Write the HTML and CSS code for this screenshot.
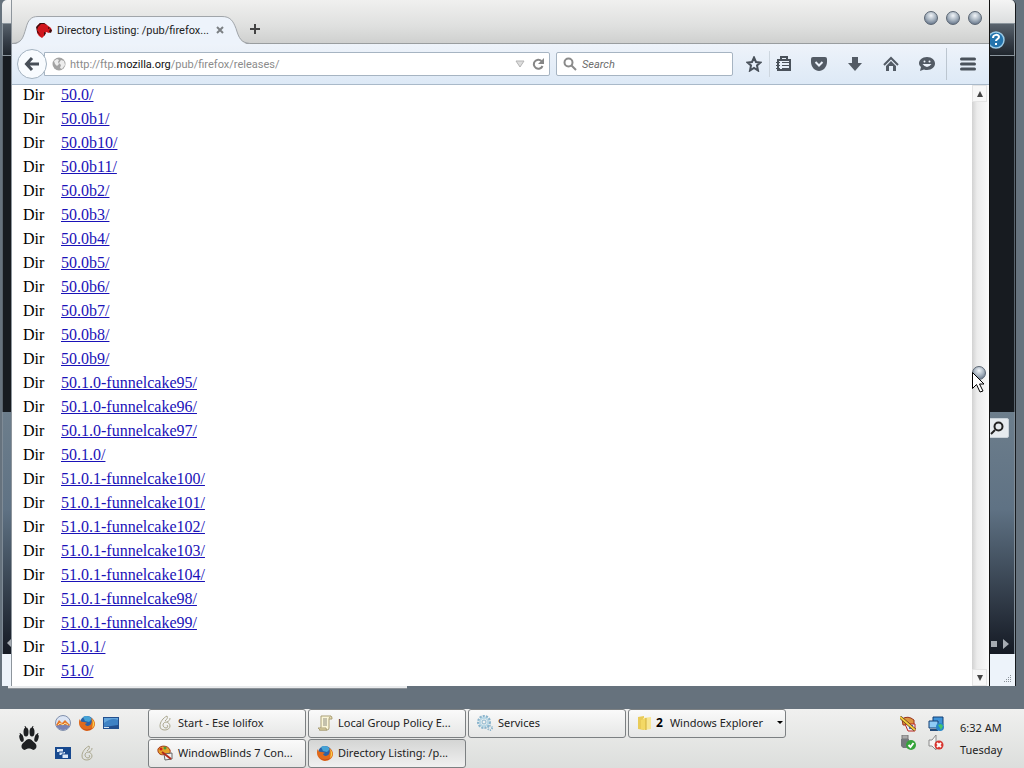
FILE: index.html
```html
<!DOCTYPE html>
<html lang="en">
<head>
    <meta charset="UTF-8">
    <title>Directory Listing: /pub/firefox/releases/</title>
    <link rel="stylesheet" href="styles.css">
</head>
<body>
    <!-- icons used more than once -->
    <svg class="defs" aria-hidden="true">
        <symbol id="firefox" viewBox="0 0 16 16">
            <circle cx="8" cy="8" r="7" fill="#2b62a6"/>
            <path d="M4 2c3-2 7-1 9 2l-3 3-4-1z" fill="#45a3d6"/>
            <path d="M1 4c0 2 1 3 3 3 1 0 3 0 4 1L6 9c1 3 5 2 6 0 1-2 1-4 0-6 3 1 4 4 4 6 0 4-4 7-8 7S0 12 0 8c0-2 0-3 1-4z" fill="#e06a1c"/>
            <path d="M13 4c3 3 3 7 0 9 1-3 1-6 0-9z" fill="#f9cf4a"/>
            <path d="M1 10c2 5 8 6 12 3-2 3-9 4-12-3z" fill="#b93a17"/>
        </symbol>
        <symbol id="lolifox" viewBox="0 0 16 16">
            <path d="M10 1C6 3 3 7 3 11c0 3 2 4 5 4s5-2 5-4-2-4-4-4-3 2-3 3 1 3 3 3 2-2 1-3M10 1c1 2 0 3-2 5M13 3c0 2-1 3-3 4" fill="none" stroke="#aaa78e"/>
        </symbol>
        <symbol id="palette" viewBox="0 0 16 16">
            <path d="M1 4c2-4 10-4 12 1 1 4-2 5-5 4-3 2-8 0-7-5z" fill="#e5a32c" stroke="#a4391b"/>
            <circle cx="4" cy="4" r="1.5" fill="#c22"/><circle cx="8" cy="3" r="1.5" fill="#4b9a38"/>
            <path d="M7 9l8-1v6l-7 1z" fill="#f2f2f2" stroke="#666"/>
            <path d="M5 7l9 7" stroke="#b22a1c" stroke-width="2"/>
        </symbol>
    </svg>

    <div class="desktop">
        <div class="back-window">
            <div class="back-title"></div>
            <div class="back-toolbar">
                <svg class="help" viewBox="0 0 18 18" width="18" height="18">
                    <circle cx="9" cy="9" r="8" fill="#2474ad" stroke="#9ccbe6" stroke-width="1.5"/>
                    <path d="M6 7c0-4 6-4 6-1 0 2-3 2-3 4M9 12v2" fill="none" stroke="#fff" stroke-width="2"/>
                </svg>
            </div>
            <div class="back-dark"></div>
            <div class="back-panel">
                <button class="find" aria-label="Find">
                    <svg viewBox="0 0 14 14" width="14" height="14" fill="none" stroke="#222" stroke-width="2">
                        <circle cx="8.5" cy="5.5" r="4"/><path d="M5 9l-4 4"/>
                    </svg>
                </button>
                <svg class="play" viewBox="0 0 18 10" width="18" height="10" fill="#a5abb2">
                    <path d="M0 2h6v6H0zM12 0l6 5-6 5z"/>
                </svg>
                <svg class="rewind" viewBox="0 0 4 8" width="4" height="8" fill="#a5abb2"><path d="M4 0v8L0 4z"/></svg>
            </div>
            <div class="back-status">
                <svg viewBox="0 0 8 8" width="8" height="8" fill="#8c939a">
                    <path d="M6 0h1v1H6zM4 2h1v1H4zM6 2h1v1H6zM2 4h1v1H2zM4 4h1v1H4zM6 4h1v1H6zM0 6h1v1H0zM2 6h1v1H2zM4 6h1v1H4zM6 6h1v1H6z"/>
                </svg>
            </div>
        </div>
        <div class="edge"></div>

        <div class="browser">
            <div class="titlebar">
                <div class="tab">
                    <svg class="tab-shape" viewBox="0 0 238 29" width="238" height="29">
                        <path d="M0 28.500C10 28 11 22 14 12 16 4 19 .5 26 .5H210c8 0 11 4 14 12 3 10 5 15 14 16z" fill="#edf3fb"/>
                        <path d="M0 27.500C10 27 11 22 14 12 16 4 19 .5 26 .5H210c8 0 11 4 14 12 3 10 5 14 14 15" fill="none" stroke="#a0a5aa"/>
                    </svg>
                    <svg class="favicon" viewBox="0 0 16 16" width="16" height="16">
                        <path d="M1 4l3-3h4l3 2 4 3 1 3-3 2-3-1-1 3-3 3-3-2-2-3z" fill="#d0161d"/>
                        <path d="M0 5l4-4h4l3 2-3-1H5L2 5l-1 3 2 3 2 3-4-4zM12 5l2 1-2 1zM14 7l2 1-1 3-2-1zM8 10l2 1-2 3z" fill="#3a0d0d"/>
                    </svg>
                    <span class="tab-title">Directory Listing: /pub/firefox...</span>
                    <button class="close" aria-label="Close tab">
                        <svg viewBox="0 0 8 8" width="8" height="8" stroke="#7c8084" stroke-width="2"><path d="M1 1l6 6M7 1l-6 6"/></svg>
                    </button>
                </div>
                <button class="newtab" aria-label="New tab">
                    <svg viewBox="0 0 10 10" width="10" height="10" stroke="#444" stroke-width="2"><path d="M5 0v10M0 5h10"/></svg>
                </button>
                <div class="controls">
                    <button class="orb" aria-label="Minimize"></button>
                    <button class="orb" aria-label="Maximize"></button>
                    <button class="orb" aria-label="Close"></button>
                </div>
            </div>

            <div class="toolbar">
                <button class="back" aria-label="Back">
                    <svg viewBox="0 0 16 16" width="16" height="16" fill="none" stroke="#474e57" stroke-width="3"><path d="M8 2L2.500 8 8 14M3 8h12"/></svg>
                </button>
                <div class="urlbar">
                    <svg viewBox="0 0 14 14" width="14" height="14">
                        <circle cx="7" cy="7" r="6.500" fill="#a3a3a3"/>
                        <path d="M2 4l3-2 2 1-1 2 1 2-2 2-2-2zM9 3l3 1 1 4-3 4-2-1 1-3-2-2z" fill="#ededed"/>
                    </svg>
                    <a class="url" href="#">http://ftp.<b>mozilla.org</b>/pub/firefox/releases/</a>
                    <svg viewBox="0 0 10 8" width="10" height="8" fill="#ddd" stroke="#b4b4b4"><path d="M1 1h8L5 7z"/></svg>
                    <button class="reload" aria-label="Reload">
                        <svg viewBox="0 0 12 12" width="12" height="12"><path d="M9.500 3a4.500 4.500 0 1 0 1 5" fill="none" stroke="#868686" stroke-width="2"/><path d="M12 0v6H6z" fill="#868686"/></svg>
                    </button>
                </div>
                <label class="search">
                    <svg viewBox="0 0 14 14" width="14" height="14" fill="none" stroke="#8a8a8a" stroke-width="2"><circle cx="5.500" cy="5.500" r="4"/><path d="M8.500 8.500L13 13"/></svg>
                    <input type="text" placeholder="Search" aria-label="Search">
                </label>
                <button class="tool star" aria-label="Bookmark">
                    <svg viewBox="0 0 16 16" width="16" height="16" fill="none" stroke="#4a525b" stroke-width="2"><path d="M8 1.500l2 4.500 4.500.5-3.500 3 1 5L8 12l-4 2.500 1-5-3.500-3L6 6z"/></svg>
                </button>
                <button class="tool list" aria-label="Bookmarks list">
                    <svg viewBox="0 0 16 16" width="16" height="16" fill="none" stroke="#4a525b">
                        <path d="M2 4h12v10H2z" stroke-width="2"/><path d="M5 3V1h6v2" stroke-width="2"/>
                        <path d="M0 6.500h4M0 9.500h4M0 12.500h4M6 6.500h7M6 9.500h7M6 12.500h7"/>
                    </svg>
                </button>
                <button class="tool" aria-label="Pocket">
                    <svg viewBox="0 0 16 16" width="16" height="16"><path d="M0 3q0-2 2-2h12q2 0 2 2v3c0 5-4 9-8 9S0 11 0 6z" fill="#535b65"/><path d="M4.500 6L8 9.500 11.500 6" fill="none" stroke="#edf3fb" stroke-width="2"/></svg>
                </button>
                <button class="tool" aria-label="Downloads">
                    <svg viewBox="0 0 16 16" width="16" height="16" fill="#535b65"><path d="M5 1h6v6h4l-7 8-7-8h4z"/></svg>
                </button>
                <button class="tool" aria-label="Home">
                    <svg viewBox="0 0 16 16" width="16" height="16"><path d="M1 9l7-7 7 7" fill="none" stroke="#535b65" stroke-width="2"/><path d="M3 10l5-5 5 5v5h-3v-5H6v5H3z" fill="#535b65"/></svg>
                </button>
                <button class="tool" aria-label="Chat">
                    <svg viewBox="0 0 16 16" width="16" height="16"><path d="M8 1c5 0 8 3 8 6.500S13 14 8 14c-1 0-2 0-3-.5L1 15l1-4C1 10 0 9 0 7.500 0 4 3 1 8 1z" fill="#535b65"/><path d="M3.500 8q4.500 6 9 0z" fill="#edf3fb"/><circle cx="5.500" cy="5.500" r="1" fill="#edf3fb"/><circle cx="10.500" cy="5.500" r="1" fill="#edf3fb"/></svg>
                </button>
                <button class="tool menu" aria-label="Menu">
                    <svg viewBox="0 0 16 14" width="16" height="14" stroke="#4a525b" stroke-width="3" stroke-linecap="round"><path d="M1.500 2h13M1.500 7h13M1.500 12h13"/></svg>
                </button>
            </div>

            <div class="viewport">
                <div class="page">
                    <table class="listing">
                        <tr><td>Dir</td><td><a href="#">50.0/</a></td></tr>
                        <tr><td>Dir</td><td><a href="#">50.0b1/</a></td></tr>
                        <tr><td>Dir</td><td><a href="#">50.0b10/</a></td></tr>
                        <tr><td>Dir</td><td><a href="#">50.0b11/</a></td></tr>
                        <tr><td>Dir</td><td><a href="#">50.0b2/</a></td></tr>
                        <tr><td>Dir</td><td><a href="#">50.0b3/</a></td></tr>
                        <tr><td>Dir</td><td><a href="#">50.0b4/</a></td></tr>
                        <tr><td>Dir</td><td><a href="#">50.0b5/</a></td></tr>
                        <tr><td>Dir</td><td><a href="#">50.0b6/</a></td></tr>
                        <tr><td>Dir</td><td><a href="#">50.0b7/</a></td></tr>
                        <tr><td>Dir</td><td><a href="#">50.0b8/</a></td></tr>
                        <tr><td>Dir</td><td><a href="#">50.0b9/</a></td></tr>
                        <tr><td>Dir</td><td><a href="#">50.1.0-funnelcake95/</a></td></tr>
                        <tr><td>Dir</td><td><a href="#">50.1.0-funnelcake96/</a></td></tr>
                        <tr><td>Dir</td><td><a href="#">50.1.0-funnelcake97/</a></td></tr>
                        <tr><td>Dir</td><td><a href="#">50.1.0/</a></td></tr>
                        <tr><td>Dir</td><td><a href="#">51.0.1-funnelcake100/</a></td></tr>
                        <tr><td>Dir</td><td><a href="#">51.0.1-funnelcake101/</a></td></tr>
                        <tr><td>Dir</td><td><a href="#">51.0.1-funnelcake102/</a></td></tr>
                        <tr><td>Dir</td><td><a href="#">51.0.1-funnelcake103/</a></td></tr>
                        <tr><td>Dir</td><td><a href="#">51.0.1-funnelcake104/</a></td></tr>
                        <tr><td>Dir</td><td><a href="#">51.0.1-funnelcake98/</a></td></tr>
                        <tr><td>Dir</td><td><a href="#">51.0.1-funnelcake99/</a></td></tr>
                        <tr><td>Dir</td><td><a href="#">51.0.1/</a></td></tr>
                        <tr><td>Dir</td><td><a href="#">51.0/</a></td></tr>
                    </table>
                </div>
                <div class="scrollbar">
                    <button class="arrow" aria-label="Scroll up"><svg viewBox="0 0 6 6" width="6" height="6" fill="#444"><path d="M3 0l3 6H0z"/></svg></button>
                    <div class="track"><div class="orb thumb"></div></div>
                    <button class="arrow" aria-label="Scroll down"><svg viewBox="0 0 6 6" width="6" height="6" fill="#444"><path d="M0 0h6L3 6z"/></svg></button>
                </div>
            </div>
        </div>

        <svg class="cursor" viewBox="0 0 13 21" width="13" height="21"><path d="M.5.5v16l4-4 3.500 7.500 3-1-3.500-7H12z" fill="#fff" stroke="#000"/></svg>
    </div>

    <div class="taskbar">
        <button class="start" aria-label="Start">
            <svg viewBox="0 0 20 26" width="20" height="26" fill="#1e2022">
                <ellipse cx="7" cy="6" rx="2.500" ry="4.500"/><ellipse cx="13" cy="6" rx="2.500" ry="4.500"/>
                <ellipse cx="2.500" cy="12" rx="2" ry="4" transform="rotate(-15 2.500 12)"/><ellipse cx="17.500" cy="12" rx="2" ry="4" transform="rotate(15 17.500 12)"/>
                <path d="M10 13c3 0 4 3 6 4 3 3 1 7-2 7-2-2-6-2-8 0-3 0-5-4-2-7 2-1 3-4 6-4z"/>
                <path d="M6 0l1 3M14 0l-1 3M1 7l1 3M19 7l-1 3" stroke="#1e2022"/>
            </svg>
        </button>
        <div class="quick">
            <svg viewBox="0 0 16 16"><circle cx="8" cy="8" r="7.500" fill="#dce5f4" stroke="#8190ac"/><path d="M1 10l3-5 3 3 3-3 5 5-4 3H5z" fill="#e7772a"/><path d="M1 11q7-3 14 0-3 4-7 4t-7-4z" fill="#7a83b4"/><path d="M3 10l2-2 3 2 2-2 3 2" fill="none" stroke="#fae19a"/></svg>
            <svg><use href="#firefox"/></svg>
            <svg viewBox="0 0 16 16"><path d="M0 2h16v12H0z" fill="#234f8e"/><path d="M1 3h14v7L1 12z" fill="#3f82c4"/><path d="M1 8q8-6 14-3V3H1z" fill="#65a6dc"/><path d="M1 12h5v1H1z" fill="#d8e6f2"/></svg>
            <svg viewBox="0 0 16 16"><path d="M0 2h16v12H0z" fill="#17498f"/><path d="M2 4h6v3H2zM4 7h6v3H4zM7 9h6v4H7z" fill="#dbe8f7"/><path d="M4 10V7h5M7 13V9h6" fill="none" stroke="#17498f"/></svg>
            <svg><use href="#lolifox"/></svg>
        </div>
        <div class="tasks">
            <button class="task"><svg><use href="#lolifox"/></svg><span>Start - Ese lolifox</span></button>
            <button class="task"><svg viewBox="0 0 16 16"><path d="M4 1h10q-2 1-2 3v9q0 2-2 2H2q2-1 2-3z" fill="#fbf6d8" stroke="#aa9f76"/><path d="M6 4h4M6 6h4M6 8h4M6 10h4" stroke="#8d8c80"/><path d="M12 4h3q0-3-1-3M1 13h8q0 2 1 2H3z" fill="#e6dbab" stroke="#aa9f76"/></svg><span>Local Group Policy E...</span></button>
            <button class="task"><svg viewBox="0 0 16 16" fill="none" stroke="#8ab4cc"><circle cx="7" cy="7" r="5.500" stroke-width="3" stroke-dasharray="2 1"/><circle cx="7" cy="7" r="4" stroke="#b9d8e6" stroke-width="2"/><circle cx="7" cy="7" r="2"/><circle cx="13" cy="13" r="2" stroke-width="2" stroke-dasharray="1 1"/></svg><span>Services</span></button>
            <button class="task"><svg viewBox="0 0 16 16"><path d="M1 2l6-1v14l-6-1z" fill="#e9cb58"/><path d="M6 3l8-1v12l-7 1z" fill="#f8e693"/><path d="M4 5l5-2v12l-5-1z" fill="#f3d865"/><path d="M9 3v12" stroke="#cfae3c"/></svg><b>2</b><span>Windows Explorer</span><i class="caret"></i></button>
            <button class="task"><svg><use href="#palette"/></svg><span>WindowBlinds 7 Con...</span></button>
            <button class="task active"><svg><use href="#firefox"/></svg><span>Directory Listing: /p...</span></button>
        </div>
        <div class="tray">
            <svg viewBox="0 0 16 16"><path d="M2 3q6-4 12 1v5H3z" fill="#dd9440" stroke="#9a321c"/><path d="M5 8h10v7H8z" fill="#e9ecf5" stroke="#c02620"/><path d="M9 9h4v4H9z" fill="#527ac8"/><path d="M0 1l15 13" stroke="#4d3018" stroke-width="3"/><path d="M0 1l15 13" stroke="#f5ce3f" stroke-width="2"/></svg>
            <svg viewBox="0 0 16 16"><path d="M5 1h10v8H5z" fill="#3f93d8" stroke="#123e75"/><path d="M1 5h9v7H1z" fill="#8fcbf5" stroke="#123e75"/><path d="M2 14h8" stroke="#254b78" stroke-width="2"/><circle cx="12" cy="11" r="4" fill="#2686c8"/><path d="M10 9l3-1 2 2-2 4-1-2z" fill="#45c46a"/></svg>
            <svg viewBox="0 0 16 16"><path d="M2 0h6v4H2z" fill="#aaa" stroke="#777"/><path d="M1 4h8v7l-2 2H3l-2-2z" fill="#74797d"/><circle cx="11" cy="10" r="5" fill="#35a43b"/><path d="M8.500 10l2 2 3-4" fill="none" stroke="#fff" stroke-width="2"/></svg>
            <svg viewBox="0 0 16 16"><path d="M1 5h3l4-5v15l-4-4H1z" fill="#f5f5f5" stroke="#8a8a8a"/><circle cx="11" cy="10" r="4.500" fill="#d7352f"/><path d="M9 8l4 4M13 8l-4 4" stroke="#fff" stroke-width="2"/></svg>
        </div>
        <div class="clock">
            <span>6:32 AM</span>
            <span>Tuesday</span>
        </div>
    </div>
</body>
</html>
```
FILE: styles.css
```css
* {
    box-sizing: border-box;
}
body {
    margin: 0;
    height: 100vh;
    display: flex;
    flex-direction: column;
    overflow: hidden;
    font-family: "Noto Sans", sans-serif;
    font-size: 11px;
    color: #222;
}
button {
    border: 0;
    padding: 0;
    margin: 0;
    background: none;
    font: inherit;
    color: inherit;
    display: flex;
    align-items: center;
    justify-content: center;
}
svg {
    flex: none;
}
.defs {
    position: absolute;
    width: 0;
    height: 0;
}
.desktop {
    flex: 1;
    min-height: 0;
    position: relative;
    background: #66727d;
}

/* window behind the browser */
.back-window {
    position: absolute;
    top: 0;
    left: 2px;
    right: 8px;
    bottom: 23px;
    display: flex;
    flex-direction: column;
    border: solid #16191d;
    border-width: 0 1px 0 0;
    border-radius: 5px 5px 0 0;
    overflow: hidden;
}
.back-title {
    height: 23px;
    background: linear-gradient(#f4f4f4, #dcdedf);
}
.back-toolbar {
    height: 33px;
    position: relative;
    border: 1px solid #8a949c;
    background: linear-gradient(#59636d, #39414b 50%, #20262d);
}
.help {
    position: absolute;
    right: 9px;
    top: 7px;
}
.back-dark {
    height: 356px;
    background: #171b20;
    border: solid #59636c;
    border-width: 0 1px;
}
.back-panel {
    flex: 1;
    position: relative;
    background: linear-gradient(#6d7e8c, #5f7284 40%, #151a24);
    border: solid #7f8b96;
    border-width: 0 1px;
}
.find {
    position: absolute;
    right: 5px;
    top: 6px;
    width: 24px;
    height: 20px;
    border: 1px solid #c9d2d9;
    border-radius: 2px;
    background: #e6ebef;
}
.play {
    position: absolute;
    right: 5px;
    bottom: 5px;
}
.rewind {
    position: absolute;
    left: 4px;
    bottom: 7px;
}
.back-status {
    height: 32px;
    display: flex;
    justify-content: flex-end;
    align-items: flex-end;
    padding: 3px;
    background: #edf3fa;
}
.edge {
    position: absolute;
    left: 8px;
    bottom: 20px;
    width: 399px;
    height: 3px;
    background: #e8eaec;
    border-bottom: 1px solid #8b9197;
}

/* browser */
.browser {
    position: absolute;
    top: 0;
    left: 11px;
    right: 34px;
    bottom: 23px;
    display: flex;
    flex-direction: column;
    border: solid #8d959c;
    border-width: 0 1px;
    border-right-color: #111;
    background: #fff;
    font-family: Roboto, sans-serif;
}
.titlebar {
    height: 44px;
    display: flex;
    align-items: flex-end;
    background: linear-gradient(#f0f0ef, #dfe0df 60%, #cfd0cf);
    border-bottom: 1px solid #999d9f;
}
.tab {
    position: relative;
    width: 238px;
    height: 28px;
    margin-bottom: -1px;
    padding: 0 16px 0 24px;
    display: flex;
    align-items: center;
    gap: 5px;
}
.tab > * {
    position: relative;
}
.tab .tab-shape {
    position: absolute;
    left: 0;
    top: 0;
}
.tab-title {
    flex: 1;
    white-space: nowrap;
}
.close {
    width: 16px;
    height: 16px;
    margin-right: 8px;
}
.newtab {
    width: 10px;
    height: 28px;
}
.controls {
    display: flex;
    gap: 8px;
    align-self: flex-start;
    margin: 11px 7px 0 auto;
}
.orb {
    width: 14px;
    height: 14px;
    border-radius: 50%;
    border: 1px solid #5a6572;
    background: radial-gradient(circle at 50% 30%, #f1f5f9, #aab6c2 45%, #66758a 85%);
}
.toolbar {
    height: 41px;
    display: flex;
    align-items: center;
    padding-left: 5px;
    background: linear-gradient(#eef3fa, #dde9f6);
    border-bottom: 1px solid #a9b9c9;
}
.back {
    width: 30px;
    height: 30px;
    border-radius: 50%;
    border: 1px solid #a3b2c0;
    background: #f8fbfe;
    z-index: 1;
}
.urlbar {
    flex: 1;
    height: 24px;
    margin-left: -3px;
    padding: 0 2px 0 7px;
    display: flex;
    align-items: center;
    gap: 4px;
    border: 1px solid #a6b4c2;
    border-radius: 0 2px 2px 0;
    background: #fff;
}
.url {
    flex: 1;
    color: #8b8b8b;
    text-decoration: none;
    white-space: nowrap;
}
.url b {
    font-weight: normal;
    color: #111;
}
.reload {
    width: 18px;
    height: 20px;
}
.search {
    width: 177px;
    height: 24px;
    margin: 0 5px 0 6px;
    padding: 0 6px;
    display: flex;
    align-items: center;
    gap: 5px;
    border: 1px solid #a6b4c2;
    border-radius: 2px;
    background: #fff;
}
.search input {
    width: 100%;
    min-width: 0;
    border: 0;
    padding: 0;
    outline: 0;
    background: none;
    font: italic 11px Roboto, sans-serif;
}
.search input::placeholder {
    color: #6d6d6d;
}
.tool {
    width: 36px;
    height: 26px;
}
.star {
    width: 32px;
    border-right: 1px solid #cdd6df;
}
.list {
    width: 28px;
    margin-right: 3px;
}
.menu {
    width: 43px;
    height: 32px;
    margin-left: 1px;
    border-left: 1px solid #bcc6d0;
}
.viewport {
    flex: 1;
    min-height: 0;
    display: flex;
}
.page {
    flex: 1;
    overflow: hidden;
}
.listing {
    margin: -2px 0 0 11px;
    border-collapse: collapse;
    font: 16px/24px "Liberation Serif", serif;
    color: #000;
}
.listing td {
    height: 24px;
    padding: 0;
}
.listing td:first-child {
    width: 38px;
}
.listing a {
    color: #1a12b8;
}
.scrollbar {
    width: 17px;
    display: flex;
    flex-direction: column;
    background: linear-gradient(90deg, #d2d2d2, #ececec 30%, #fafafa);
}
.arrow {
    width: 15px;
    height: 17px;
    border: 1px solid #e4e4e4;
    background: #f7f7f7;
}
.track {
    flex: 1;
    padding-top: 264px;
}
.cursor {
    position: absolute;
    left: 972px;
    top: 372px;
}

/* taskbar */
.taskbar {
    height: 59px;
    display: flex;
    background: linear-gradient(#f0f0ef, #dcdedc);
}
.start {
    width: 55px;
    padding-left: 2px;
}
.quick {
    width: 93px;
    padding-top: 6px;
    display: grid;
    grid-template-columns: repeat(3, 16px);
    grid-auto-rows: 16px;
    gap: 14px 8px;
}
.quick svg, .task svg, .tray svg {
    width: 16px;
    height: 16px;
}
.tasks {
    flex: 1;
    display: grid;
    grid-template-columns: repeat(4, 158px);
    grid-auto-rows: 29px;
    gap: 1px 2px;
}
.task {
    justify-content: flex-start;
    gap: 5px;
    padding: 0 8px 2px;
    border: 1px solid #7c8082;
    border-radius: 3px;
    background: linear-gradient(#fafafa, #e6e7e6);
    white-space: nowrap;
}
.task b {
    margin: 0 2px 0 -2px;
    font-size: 12px;
    color: #000;
}
.active {
    background: linear-gradient(#d4d5d4, #f0f0f0);
}
.caret {
    margin-left: auto;
    margin-right: -6px;
    border: 3px solid transparent;
    border-top-color: #000;
    border-bottom: 0;
}
.tray {
    width: 60px;
    padding-top: 7px;
    display: grid;
    grid-template-columns: 16px 16px;
    grid-auto-rows: 16px;
    gap: 3px 12px;
}
.clock {
    width: 64px;
    padding-top: 8px;
    display: flex;
    flex-direction: column;
    line-height: 22px;
}
```
